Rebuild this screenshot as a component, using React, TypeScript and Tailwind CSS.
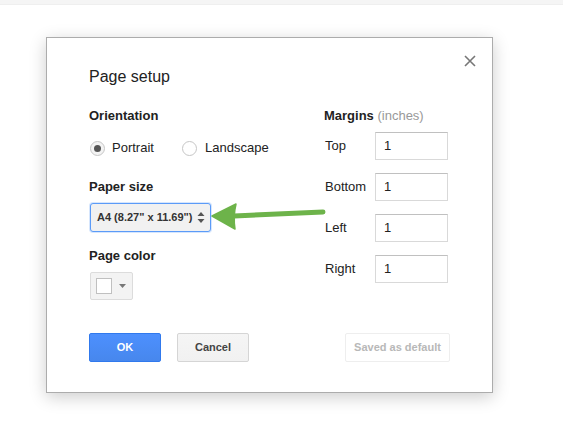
export default function App() {
  const margins = ['Top', 'Bottom', 'Left', 'Right']

  return (
    <div className="relative min-h-[447px] w-[563px] bg-white font-['Liberation_Sans',Arial,sans-serif] text-[13px] text-[#222]">
      <div className="h-[5px] bg-[#f5f5f5] border-b border-[#efefef]" />

      <div className="relative ml-[46px] mt-[32px] w-[447px] border border-[#acacac] bg-white px-[42px] pt-[29px] pb-[30px] shadow-[0_4px_16px_rgba(0,0,0,0.2)]">
        <button className="absolute right-[16px] top-[17px] text-[#777]">
          <svg width="12" height="12" viewBox="0 0 12 12">
            <path d="M1 1 L11 11 M11 1 L1 11" stroke="currentColor" strokeWidth="1.6" />
          </svg>
        </button>

        <div className="text-[16px] leading-[20px]">Page setup</div>

        <div className="mt-[21px] flex">
          <div className="w-[235px]">
            <div className="font-bold leading-4">Orientation</div>
            <div className="mt-[16px] flex h-4 items-center">
              <div className="ml-[1px] flex w-[92px] items-center">
                <span className="flex h-[15px] w-[15px] items-center justify-center rounded-full border border-[#c6c6c6] bg-[#f3f3f3]">
                  <span className="h-[7px] w-[7px] rounded-full bg-[#555]" />
                </span>
                <span className="ml-[7px]">Portrait</span>
              </div>
              <div className="flex items-center">
                <span className="h-[15px] w-[15px] rounded-full border border-[#c6c6c6] bg-white" />
                <span className="ml-[8px]">Landscape</span>
              </div>
            </div>

            <div className="mt-[23px] font-bold leading-4">Paper size</div>
            <div className="mt-[8px] ml-[1px] flex h-[29px] w-[121px] items-center justify-between rounded-[3px] border border-[#5b9bf8] bg-[#f1f1f1] pl-[6px] pr-[5px] text-[11px] font-bold text-[#333] shadow-[0_0_0_1px_rgba(91,155,248,0.25)]">
              <span>A4 (8.27&quot; x 11.69&quot;)</span>
              <svg width="8" height="11" viewBox="0 0 8 11" className="text-[#555]">
                <path d="M4 0 L7.5 4 L0.5 4 Z M4 11 L0.5 7 L7.5 7 Z" fill="currentColor" />
              </svg>
            </div>

            <div className="mt-[16px] font-bold leading-4">Page color</div>
            <div className="mt-[8px] ml-[1px] flex h-[28px] w-[43px] items-center rounded-[2px] border border-[#dcdcdc] bg-[#f3f3f3] pl-[5px]">
              <span className="h-[16px] w-[16px] border border-[#c0c0c0] bg-white" />
              <svg width="7" height="4" viewBox="0 0 7 4" className="ml-[7px] text-[#777]">
                <path d="M0 0 L7 0 L3.5 4 Z" fill="currentColor" />
              </svg>
            </div>
          </div>

          <div>
            <div className="leading-4">
              <span className="font-bold">Margins</span>
              <span className="text-[#999]"> (inches)</span>
            </div>
            <div className="mt-[8px] flex flex-col gap-[13px]">
              {margins.map((m) => (
                <div key={m} className="flex h-[28px] items-center">
                  <span className="ml-[1px] w-[50px]">{m}</span>
                  <div className="flex h-[28px] w-[73px] items-center border border-[#d9d9d9] border-t-[#c0c0c0] pl-[8px]">
                    1
                  </div>
                </div>
              ))}
            </div>
          </div>
        </div>

        <div className="mt-[33px] flex items-center justify-between text-[11px] font-bold">
          <div className="flex gap-[16px]">
            <button className="h-[29px] w-[72px] rounded-[2px] border border-[#3079ed] bg-gradient-to-b from-[#4d90fe] to-[#4787ed] text-white">
              OK
            </button>
            <button className="h-[29px] w-[72px] rounded-[2px] border border-[#d5d5d5] bg-gradient-to-b from-[#f5f5f5] to-[#f1f1f1] text-[#444]">
              Cancel
            </button>
          </div>
          <button className="h-[29px] w-[105px] rounded-[2px] border border-[#eeeeee] bg-white text-[#b8b8b8]">
            Saved as default
          </button>
        </div>
      </div>

      <svg
        className="absolute left-[205px] top-[198px]"
        width="125"
        height="36"
        viewBox="0 0 125 36"
      >
        <path d="M118 14 L29 18" stroke="#6db34a" strokeWidth="5" strokeLinecap="round" />
        <path d="M7 18 L31 6 Q28 18 30 31 Z" fill="#6db34a" stroke="#6db34a" strokeWidth="1.5" strokeLinejoin="round" />
      </svg>
    </div>
  )
}
